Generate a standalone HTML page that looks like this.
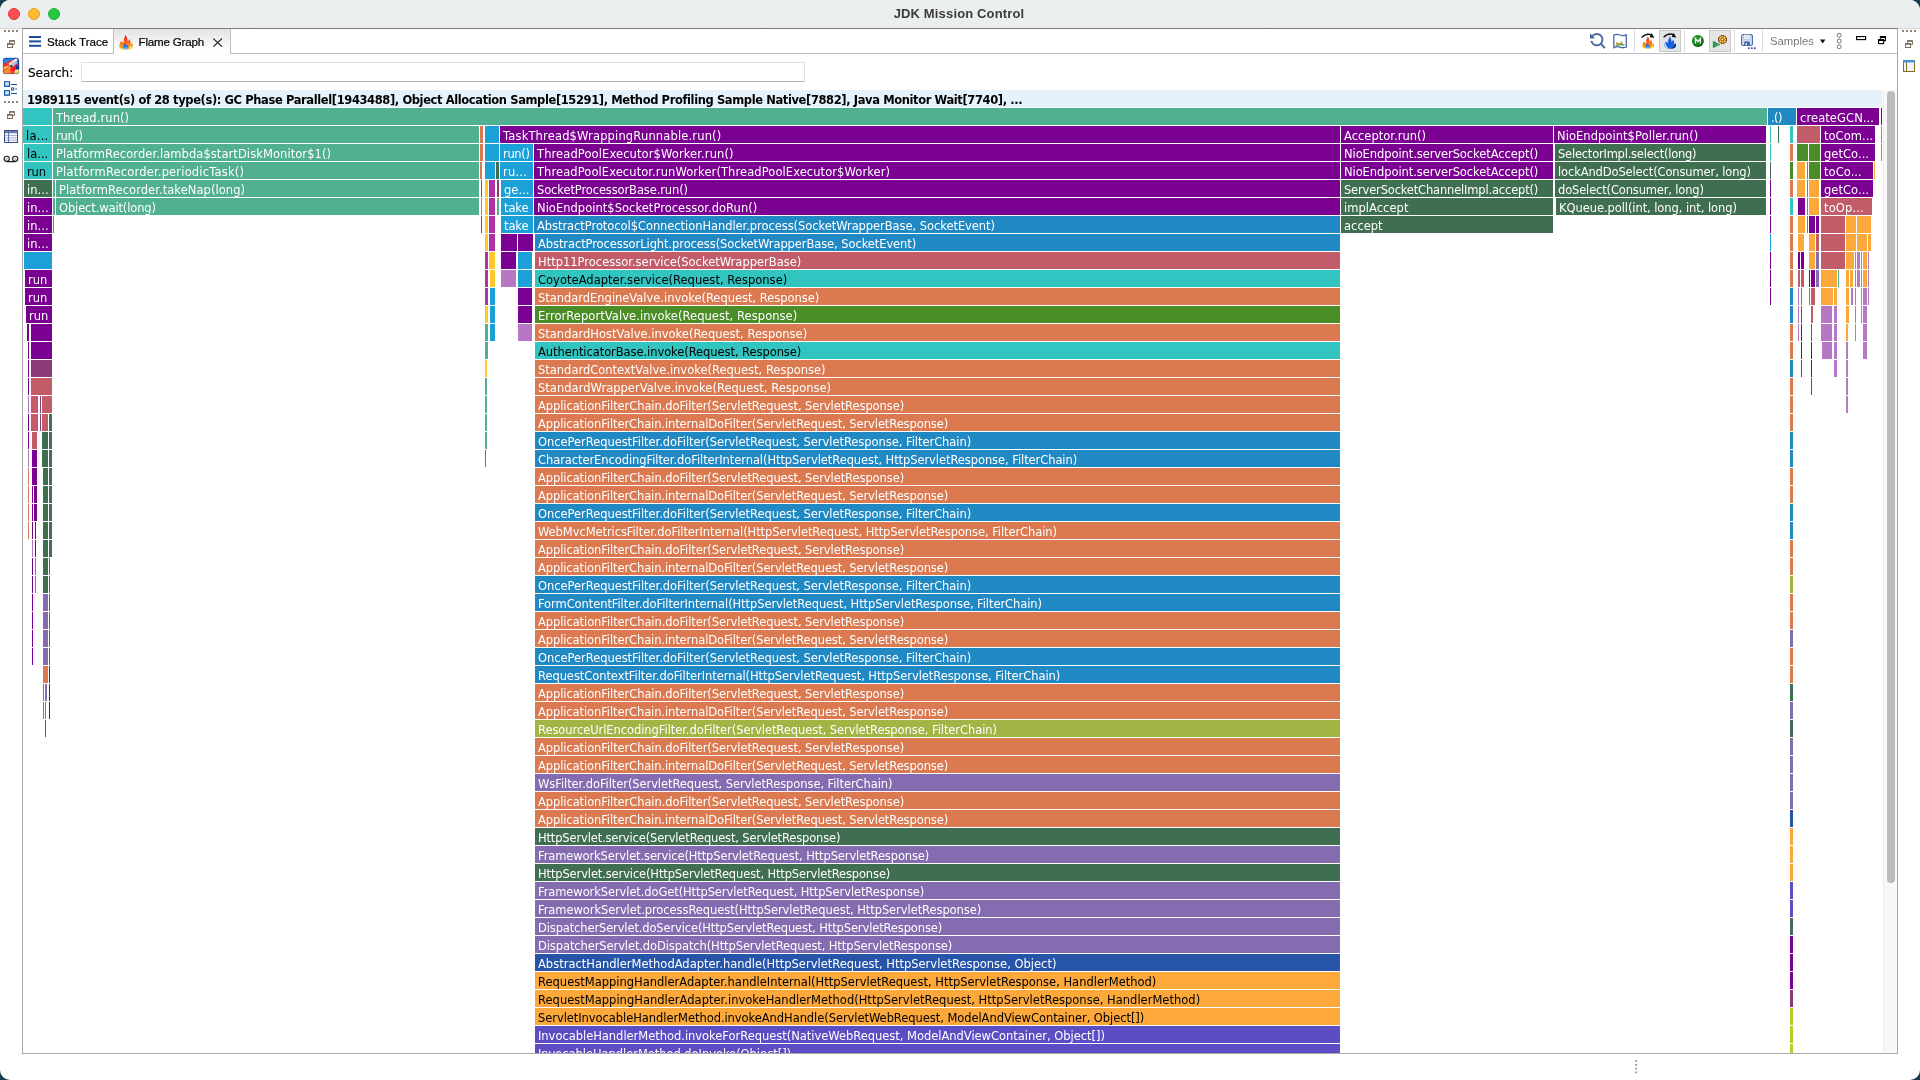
<!DOCTYPE html>
<html lang="en">
<head>
<meta charset="utf-8">
<title>JDK Mission Control</title>
<style>
*{box-sizing:border-box;margin:0;padding:0}
html,body{width:1920px;height:1080px;overflow:hidden;background:#153c4a}
body{position:relative;font-family:"DejaVu Sans","Liberation Sans",sans-serif;font-size:11.5px;color:#000}
#win{position:absolute;left:0;top:0;width:1920px;height:1080px;background:#fff;overflow:hidden;border-radius:10px;will-change:transform}
#titlebar{position:absolute;left:0;top:0;width:1920px;height:29px;background:linear-gradient(#f3f5f5,#ecefef 1.5px,#ebeeee 27px,#e9ecec 28px,#d6d8d8 28px)}
#title{position:absolute;left:0;top:0;width:1920px;height:28px;line-height:27px;text-align:center;font-family:"Liberation Sans",sans-serif;font-weight:bold;font-size:13px;color:#3c3c3c;letter-spacing:.15px;padding-right:2px}
.tl{position:absolute;top:8px;width:12px;height:12px;border-radius:50%}
#panel{position:absolute;left:22px;top:28px;width:1876px;height:1026px;border:1px solid #a9a9a9;border-top-color:#7e7e7e;background:#fff}
#tabline{position:absolute;left:23px;top:53px;width:1874px;height:1px;background:#bdbdbd}
.tab{position:absolute;top:29px;height:24px;font-family:"Liberation Sans",sans-serif;font-size:11.6px;color:#000;-webkit-text-stroke:.2px #000;line-height:25px;white-space:nowrap}
#tab1{left:23px;width:90px}
#tab2{left:113px;width:118px;height:25px;border-left:1px solid #bdbdbd;border-right:1px solid #bdbdbd;background:linear-gradient(#e3e3e3,#f4f4f4 55%,#fff 85%)}
.tab span{position:absolute;top:0}
#search{position:absolute;left:28px;top:63.6px;font-size:12px;line-height:18px;color:#000;-webkit-text-stroke:.15px #000}
#sinput{position:absolute;left:81px;top:62px;width:724px;height:20px;border:1px solid #e0e0e0;border-bottom-color:#b4b4b4;border-radius:1.5px;background:#fff}
#hdr{position:absolute;left:23px;top:90px;width:1859px;height:17px;overflow:hidden;background:#e5f2fb;font-family:"DejaVu Sans",sans-serif;font-weight:bold;font-size:11.5px;line-height:21px;padding-left:4px;white-space:nowrap;color:#000;letter-spacing:-.39px}
#track{position:absolute;left:1883px;top:90px;width:14px;height:963px;background:#f8f8f8;border-left:1px solid #ececec}
#thumb{position:absolute;left:1887px;top:91px;width:8px;height:792px;border-radius:4px;background:#bbb}
#flame{position:absolute;left:0;top:0;width:1897px;height:1053px;overflow:hidden}
.r{position:absolute;left:0;width:1897px;height:17px}
.s{position:absolute;top:0;height:17px;overflow:hidden;white-space:nowrap;color:#fff;line-height:20px;font-size:11.5px}
.s span{position:absolute;left:3px;top:0}
.k{color:#000}
.cG{background:#50B091}
.cC{background:#31C4C0}
.cP{background:#7B0092}
.cDG{background:#3F6E50}
.cB{background:#2089C4}
.cLB{background:#1CA0D8}
.cS{background:#C15C68}
.cO{background:#DB7A50}
.cOL{background:#4A8D26}
.cYG{background:#A2B444}
.cLV{background:#856BB0}
.cDB{background:#2554A8}
.cYO{background:#FDA83A}
.cIN{background:#5D4DC4}
.cOR{background:#B877C4}
.cY{background:#FFC72C}
.cM{background:#B030A8}
.cDM{background:#8B3A78}
.cLM{background:#B5CF2A}
.cCR{background:#C8325A}
.cOV{background:#8A9A3A}
.ic{position:absolute}
.sep{position:absolute;top:30px;width:1px;height:22px;background:#dcdcdc}
.pressed{position:absolute;top:30px;height:22px;background:#e5e5e5;border:1px solid #c8c8c8}
</style>
</head>
<body>
<div id="win">
<div id="titlebar"></div>
<div id="title">JDK Mission Control</div>
<div class="tl" style="left:8px;background:#fe5054;border:.5px solid #df3239"></div>
<div class="tl" style="left:28px;background:#febc2e;border:.5px solid #e0a028"></div>
<div class="tl" style="left:48px;background:#28c840;border:.5px solid #1fae32"></div>
<div id="panel"></div>
<div id="tabline"></div>
<div class="tab" id="tab1"><span style="left:24px">Stack Trace</span></div>
<div class="tab" id="tab2"><span style="left:24.5px;letter-spacing:-.2px">Flame Graph</span></div>
<div id="search">Search:</div>
<div id="sinput"></div>
<div id="hdr">1989115 event(s) of 28 type(s): GC Phase Parallel[1943488], Object Allocation Sample[15291], Method Profiling Sample Native[7882], Java Monitor Wait[7740], ...</div>
<div id="track"></div>
<div id="thumb"></div>
<div id="flame">
<div class="r" style="top:108px">
<div class="s cC" style="left:23px;width:29px"></div>
<div class="s cG" style="left:53px;width:1714px"><span style="letter-spacing:0.086px">Thread.run()</span></div>
<div class="s cB" style="left:1768px;width:28px"><span style="letter-spacing:-0.620px">.()</span></div>
<div class="s cP" style="left:1797px;width:82px"><span style="letter-spacing:0.089px">createGCN...</span></div>
<div class="s cP" style="left:1881px;width:1px"></div>
</div>
<div class="r" style="top:126px">
<div class="s cC k" style="left:23px;width:29px"><span style="letter-spacing:0.258px">la...</span></div>
<div class="s cG" style="left:53px;width:426px"><span style="letter-spacing:-0.320px">run()</span></div>
<div class="s cO" style="left:480px;width:3px"></div>
<div class="s cLB" style="left:485px;width:14px"></div>
<div class="s cP" style="left:500px;width:840px"><span style="letter-spacing:0.156px">TaskThread$WrappingRunnable.run()</span></div>
<div class="s cP" style="left:1341px;width:212px"><span style="letter-spacing:0.020px">Acceptor.run()</span></div>
<div class="s cP" style="left:1554px;width:212px"><span style="letter-spacing:0.054px">NioEndpoint$Poller.run()</span></div>
<div class="s cC" style="left:1770px;width:1px"></div>
<div class="s cDG" style="left:1778px;width:1px"></div>
<div class="s cC" style="left:1790px;width:3px"></div>
<div class="s cS" style="left:1797px;width:23px"></div>
<div class="s cP" style="left:1821px;width:54px"><span style="letter-spacing:0.031px">toCom...</span></div>
<div class="s cO" style="left:1881px;width:1px"></div>
</div>
<div class="r" style="top:144px">
<div class="s cC k" style="left:24px;width:28px"><span style="letter-spacing:0.008px">la...</span></div>
<div class="s cG" style="left:53px;width:426px"><span style="letter-spacing:0.073px">PlatformRecorder.lambda$startDiskMonitor$1()</span></div>
<div class="s cO" style="left:480px;width:3px"></div>
<div class="s cLB" style="left:485px;width:14px"></div>
<div class="s cLB" style="left:500px;width:33px"><span style="letter-spacing:-0.345px">run()</span></div>
<div class="s cP" style="left:534px;width:806px"><span style="letter-spacing:0.104px">ThreadPoolExecutor$Worker.run()</span></div>
<div class="s cP" style="left:1341px;width:212px"><span style="letter-spacing:-0.079px">NioEndpoint.serverSocketAccept()</span></div>
<div class="s cDG" style="left:1555px;width:211px"><span style="letter-spacing:-0.223px">SelectorImpl.select(long)</span></div>
<div class="s cC" style="left:1770px;width:1px"></div>
<div class="s cO" style="left:1790px;width:3px"></div>
<div class="s cOL" style="left:1797px;width:11px"></div>
<div class="s cOL" style="left:1809px;width:11px"></div>
<div class="s cP" style="left:1821px;width:54px"><span style="letter-spacing:0.040px">getCo...</span></div>
<div class="s cG" style="left:1881px;width:1px"></div>
</div>
<div class="r" style="top:162px">
<div class="s cC k" style="left:24px;width:28px"><span style="letter-spacing:-0.106px">run</span></div>
<div class="s cG" style="left:53px;width:426px"><span style="letter-spacing:0.177px">PlatformRecorder.periodicTask()</span></div>
<div class="s cO" style="left:480px;width:2px"></div>
<div class="s cLB" style="left:485px;width:9.5px"></div>
<div class="s cDG" style="left:496px;width:2.5px"></div>
<div class="s cLB" style="left:500px;width:33px"><span style="letter-spacing:0.191px">ru...</span></div>
<div class="s cP" style="left:534px;width:806px"><span style="letter-spacing:0.082px">ThreadPoolExecutor.runWorker(ThreadPoolExecutor$Worker)</span></div>
<div class="s cP" style="left:1341px;width:212px"><span style="letter-spacing:-0.079px">NioEndpoint.serverSocketAccept()</span></div>
<div class="s cDG" style="left:1555px;width:211px"><span style="letter-spacing:-0.126px">lockAndDoSelect(Consumer, long)</span></div>
<div class="s cDG" style="left:1770px;width:1px"></div>
<div class="s cOL" style="left:1790px;width:3px"></div>
<div class="s cYO" style="left:1797px;width:8px"></div>
<div class="s cS" style="left:1807px;width:1px"></div>
<div class="s cOL" style="left:1809px;width:11px"></div>
<div class="s cP" style="left:1821px;width:52px"><span style="letter-spacing:0.062px">toCo...</span></div>
<div class="s cYO" style="left:1874px;width:1px"></div>
</div>
<div class="r" style="top:180px">
<div class="s cDG" style="left:24px;width:28px"><span style="letter-spacing:0.037px">in...</span></div>
<div class="s cG" style="left:53px;width:1.5px"></div>
<div class="s cG" style="left:56px;width:423px"><span style="letter-spacing:0.060px">PlatformRecorder.takeNap(long)</span></div>
<div class="s cDG" style="left:481px;width:1px"></div>
<div class="s cY" style="left:485px;width:2.5px"></div>
<div class="s cM" style="left:489px;width:5.5px"></div>
<div class="s cDM" style="left:497px;width:1.5px"></div>
<div class="s cLB" style="left:501px;width:32px"><span style="letter-spacing:0.039px">ge...</span></div>
<div class="s cP" style="left:534px;width:806px"><span style="letter-spacing:-0.118px">SocketProcessorBase.run()</span></div>
<div class="s cDG" style="left:1341px;width:212px"><span style="letter-spacing:-0.175px">ServerSocketChannelImpl.accept()</span></div>
<div class="s cDG" style="left:1555px;width:211px"><span style="letter-spacing:-0.155px">doSelect(Consumer, long)</span></div>
<div class="s cP" style="left:1770px;width:1px"></div>
<div class="s cO" style="left:1790px;width:3px"></div>
<div class="s cYO" style="left:1797px;width:8px"></div>
<div class="s cS" style="left:1807px;width:1px"></div>
<div class="s cYO" style="left:1809px;width:10px"></div>
<div class="s cP" style="left:1821px;width:52px"><span style="letter-spacing:0.040px">getCo...</span></div>
</div>
<div class="r" style="top:198px">
<div class="s cP" style="left:24px;width:28px"><span style="letter-spacing:0.037px">in...</span></div>
<div class="s cG" style="left:53px;width:1.5px"></div>
<div class="s cG" style="left:56px;width:423px"><span style="letter-spacing:-0.129px">Object.wait(long)</span></div>
<div class="s cOV" style="left:481px;width:1px"></div>
<div class="s cY" style="left:485px;width:2.5px"></div>
<div class="s cM" style="left:489px;width:5.5px"></div>
<div class="s cG" style="left:497px;width:1.5px"></div>
<div class="s cLB" style="left:501px;width:32px"><span style="letter-spacing:-0.097px">take</span></div>
<div class="s cP" style="left:534px;width:806px"><span style="letter-spacing:0.031px">NioEndpoint$SocketProcessor.doRun()</span></div>
<div class="s cDG" style="left:1341px;width:212px"><span style="letter-spacing:0.034px">implAccept</span></div>
<div class="s cDG" style="left:1556px;width:210px"><span style="letter-spacing:-0.073px">KQueue.poll(int, long, int, long)</span></div>
<div class="s cP" style="left:1770px;width:1px"></div>
<div class="s cC" style="left:1790px;width:3px"></div>
<div class="s cP" style="left:1798px;width:7px"></div>
<div class="s cS" style="left:1807px;width:1px"></div>
<div class="s cYO" style="left:1809px;width:10px"></div>
<div class="s cS" style="left:1821px;width:51px"><span style="letter-spacing:0.121px">toOp...</span></div>
</div>
<div class="r" style="top:216px">
<div class="s cP" style="left:24px;width:28px"><span style="letter-spacing:0.037px">in...</span></div>
<div class="s cLB" style="left:53px;width:1px"></div>
<div class="s cDG" style="left:481px;width:1px"></div>
<div class="s cY" style="left:485px;width:2.5px"></div>
<div class="s cM" style="left:489px;width:5.5px"></div>
<div class="s cLB" style="left:501px;width:32px"><span style="letter-spacing:-0.097px">take</span></div>
<div class="s cB" style="left:534px;width:806px"><span style="letter-spacing:-0.059px">AbstractProtocol$ConnectionHandler.process(SocketWrapperBase, SocketEvent)</span></div>
<div class="s cDG" style="left:1341px;width:212px"><span style="letter-spacing:0.004px">accept</span></div>
<div class="s cP" style="left:1770px;width:1px"></div>
<div class="s cO" style="left:1790px;width:3px"></div>
<div class="s cYO" style="left:1798px;width:7px"></div>
<div class="s cS" style="left:1807px;width:1px"></div>
<div class="s cP" style="left:1809px;width:5.75px"></div>
<div class="s cP" style="left:1816px;width:3px"></div>
<div class="s cS" style="left:1821px;width:24px"></div>
<div class="s cYO" style="left:1846px;width:10px"></div>
<div class="s cYO" style="left:1857px;width:14px"></div>
</div>
<div class="r" style="top:234px">
<div class="s cP" style="left:24px;width:28px"><span style="letter-spacing:0.037px">in...</span></div>
<div class="s cY" style="left:485px;width:2.5px"></div>
<div class="s cM" style="left:489px;width:5.5px"></div>
<div class="s cP" style="left:501px;width:16px"></div>
<div class="s cP" style="left:518px;width:15px"></div>
<div class="s cB" style="left:535px;width:805px"><span style="letter-spacing:-0.086px">AbstractProcessorLight.process(SocketWrapperBase, SocketEvent)</span></div>
<div class="s cLB" style="left:1770px;width:1px"></div>
<div class="s cO" style="left:1790px;width:3px"></div>
<div class="s cYO" style="left:1798px;width:6px"></div>
<div class="s cYO" style="left:1809px;width:6px"></div>
<div class="s cS" style="left:1816px;width:3px"></div>
<div class="s cS" style="left:1821px;width:24px"></div>
<div class="s cYO" style="left:1846px;width:10px"></div>
<div class="s cYO" style="left:1857px;width:10px"></div>
<div class="s cYO" style="left:1868px;width:3px"></div>
</div>
<div class="r" style="top:252px">
<div class="s cLB" style="left:24px;width:28px"></div>
<div class="s cM" style="left:485px;width:2.5px"></div>
<div class="s cY" style="left:489px;width:5.5px"></div>
<div class="s cP" style="left:501px;width:15px"></div>
<div class="s cLB" style="left:518px;width:14px"></div>
<div class="s cS" style="left:535px;width:805px"><span>Http11Processor.service(SocketWrapperBase)</span></div>
<div class="s cP" style="left:1770px;width:1px"></div>
<div class="s cO" style="left:1790px;width:3px"></div>
<div class="s cP" style="left:1798px;width:2px"></div>
<div class="s cP" style="left:1801px;width:3px"></div>
<div class="s cYO" style="left:1809px;width:6px"></div>
<div class="s cLV" style="left:1816px;width:3px"></div>
<div class="s cS" style="left:1821px;width:24px"></div>
<div class="s cYO" style="left:1846px;width:8px"></div>
<div class="s cOR" style="left:1855px;width:1px"></div>
<div class="s cOR" style="left:1857px;width:3px"></div>
<div class="s cOR" style="left:1861px;width:1px"></div>
<div class="s cYO" style="left:1863px;width:4px"></div>
<div class="s cOR" style="left:1868px;width:1px"></div>
</div>
<div class="r" style="top:270px">
<div class="s cP" style="left:25px;width:27px"><span style="letter-spacing:0.044px">run</span></div>
<div class="s cM" style="left:485px;width:2.5px"></div>
<div class="s cY" style="left:490px;width:4.5px"></div>
<div class="s cOR" style="left:501px;width:15px"></div>
<div class="s cLB" style="left:518px;width:14px"></div>
<div class="s cC k" style="left:535px;width:805px"><span style="letter-spacing:0.028px">CoyoteAdapter.service(Request, Response)</span></div>
<div class="s cP" style="left:1770px;width:1px"></div>
<div class="s cO" style="left:1790px;width:3px"></div>
<div class="s cS" style="left:1798px;width:2px"></div>
<div class="s cS" style="left:1801px;width:3px"></div>
<div class="s cP" style="left:1809px;width:1px"></div>
<div class="s cP" style="left:1811px;width:4px"></div>
<div class="s cLV" style="left:1816px;width:3px"></div>
<div class="s cYO" style="left:1821px;width:16px"></div>
<div class="s cG" style="left:1838px;width:1px"></div>
<div class="s cYO" style="left:1846px;width:3px"></div>
<div class="s cYO" style="left:1850px;width:3px"></div>
<div class="s cOR" style="left:1855px;width:1px"></div>
<div class="s cOR" style="left:1857px;width:3px"></div>
<div class="s cOR" style="left:1861px;width:1px"></div>
<div class="s cYO" style="left:1863px;width:4px"></div>
<div class="s cOR" style="left:1868px;width:1px"></div>
</div>
<div class="r" style="top:288px">
<div class="s cP" style="left:25px;width:27px"><span style="letter-spacing:0.044px">run</span></div>
<div class="s cM" style="left:485px;width:2.5px"></div>
<div class="s cLB" style="left:490px;width:4.5px"></div>
<div class="s cP" style="left:518px;width:14px"></div>
<div class="s cO" style="left:535px;width:805px"><span style="letter-spacing:-0.026px">StandardEngineValve.invoke(Request, Response)</span></div>
<div class="s cP" style="left:1770px;width:1px"></div>
<div class="s cB" style="left:1790px;width:3px"></div>
<div class="s cOR" style="left:1798px;width:1px"></div>
<div class="s cS" style="left:1801px;width:1px"></div>
<div class="s cS" style="left:1809px;width:1px"></div>
<div class="s cS" style="left:1811px;width:4px"></div>
<div class="s cYO" style="left:1821px;width:12px"></div>
<div class="s cYO" style="left:1834px;width:3px"></div>
<div class="s cYO" style="left:1846px;width:3px"></div>
<div class="s cOR" style="left:1851px;width:2px"></div>
<div class="s cOR" style="left:1855px;width:1px"></div>
<div class="s cOR" style="left:1861px;width:1px"></div>
<div class="s cOR" style="left:1863px;width:4px"></div>
<div class="s cOR" style="left:1868px;width:1px"></div>
</div>
<div class="r" style="top:306px">
<div class="s cP" style="left:26px;width:26px"><span style="letter-spacing:-0.031px">run</span></div>
<div class="s cY" style="left:485px;width:2.5px"></div>
<div class="s cLB" style="left:490px;width:4.5px"></div>
<div class="s cP" style="left:518px;width:14px"></div>
<div class="s cOL" style="left:535px;width:805px"><span style="letter-spacing:0.060px">ErrorReportValve.invoke(Request, Response)</span></div>
<div class="s cB" style="left:1790px;width:3px"></div>
<div class="s cOR" style="left:1798px;width:1px"></div>
<div class="s cDG" style="left:1801px;width:1px"></div>
<div class="s cS" style="left:1811px;width:2px"></div>
<div class="s cOR" style="left:1821px;width:11px"></div>
<div class="s cOR" style="left:1834px;width:3px"></div>
<div class="s cYO" style="left:1846px;width:3px"></div>
<div class="s cOR" style="left:1855px;width:1px"></div>
<div class="s cOR" style="left:1861px;width:1px"></div>
<div class="s cOR" style="left:1863px;width:4px"></div>
</div>
<div class="r" style="top:324px">
<div class="s cP" style="left:27px;width:1.5px"></div>
<div class="s cP" style="left:31px;width:21px"></div>
<div class="s cG" style="left:485px;width:2.5px"></div>
<div class="s cLB" style="left:490px;width:4.5px"></div>
<div class="s cOR" style="left:518px;width:14px"></div>
<div class="s cO" style="left:535px;width:805px"><span>StandardHostValve.invoke(Request, Response)</span></div>
<div class="s cO" style="left:1790px;width:3px"></div>
<div class="s cOR" style="left:1798px;width:1px"></div>
<div class="s cP" style="left:1801px;width:1px"></div>
<div class="s cDG" style="left:1811px;width:1px"></div>
<div class="s cOR" style="left:1821px;width:11px"></div>
<div class="s cOR" style="left:1834px;width:3px"></div>
<div class="s cYO" style="left:1846px;width:2px"></div>
<div class="s cOR" style="left:1855px;width:1px"></div>
<div class="s cOR" style="left:1863px;width:4px"></div>
</div>
<div class="r" style="top:342px">
<div class="s cP" style="left:28px;width:1px"></div>
<div class="s cP" style="left:31px;width:21px"></div>
<div class="s cG" style="left:485px;width:2.5px"></div>
<div class="s cC k" style="left:535px;width:805px"><span style="letter-spacing:-0.070px">AuthenticatorBase.invoke(Request, Response)</span></div>
<div class="s cO" style="left:1790px;width:3px"></div>
<div class="s cP" style="left:1801px;width:1px"></div>
<div class="s cP" style="left:1811px;width:1px"></div>
<div class="s cOR" style="left:1822px;width:10px"></div>
<div class="s cOR" style="left:1834px;width:3px"></div>
<div class="s cOR" style="left:1846px;width:2px"></div>
<div class="s cOR" style="left:1863px;width:4px"></div>
</div>
<div class="r" style="top:360px">
<div class="s cP" style="left:28px;width:1px"></div>
<div class="s cDM" style="left:31px;width:21px"></div>
<div class="s cY" style="left:485px;width:2px"></div>
<div class="s cO" style="left:535px;width:805px"><span style="letter-spacing:-0.011px">StandardContextValve.invoke(Request, Response)</span></div>
<div class="s cB" style="left:1790px;width:3px"></div>
<div class="s cDM" style="left:1801px;width:1px"></div>
<div class="s cP" style="left:1811px;width:1px"></div>
<div class="s cOR" style="left:1834px;width:3px"></div>
<div class="s cOR" style="left:1846px;width:2px"></div>
</div>
<div class="r" style="top:378px">
<div class="s cP" style="left:28px;width:1px"></div>
<div class="s cS" style="left:31px;width:21px"></div>
<div class="s cG" style="left:485px;width:2px"></div>
<div class="s cO" style="left:535px;width:805px"><span style="letter-spacing:0.025px">StandardWrapperValve.invoke(Request, Response)</span></div>
<div class="s cO" style="left:1790px;width:3px"></div>
<div class="s cDM" style="left:1811px;width:1px"></div>
<div class="s cOR" style="left:1846px;width:2px"></div>
</div>
<div class="r" style="top:396px">
<div class="s cOR" style="left:28px;width:1px"></div>
<div class="s cS" style="left:31px;width:7px"></div>
<div class="s cDM" style="left:40px;width:1px"></div>
<div class="s cS" style="left:42px;width:10px"></div>
<div class="s cG" style="left:485px;width:2px"></div>
<div class="s cO" style="left:535px;width:805px"><span style="letter-spacing:-0.088px">ApplicationFilterChain.doFilter(ServletRequest, ServletResponse)</span></div>
<div class="s cO" style="left:1790px;width:3px"></div>
<div class="s cOR" style="left:1846px;width:2px"></div>
</div>
<div class="r" style="top:414px">
<div class="s cP" style="left:28px;width:1px"></div>
<div class="s cS" style="left:31px;width:7px"></div>
<div class="s cDM" style="left:40px;width:1px"></div>
<div class="s cS" style="left:42px;width:6px"></div>
<div class="s cDG" style="left:49px;width:3px"></div>
<div class="s cG" style="left:485px;width:2px"></div>
<div class="s cO" style="left:535px;width:805px"><span style="letter-spacing:-0.101px">ApplicationFilterChain.internalDoFilter(ServletRequest, ServletResponse)</span></div>
<div class="s cO" style="left:1790px;width:3px"></div>
</div>
<div class="r" style="top:432px">
<div class="s cP" style="left:28px;width:1px"></div>
<div class="s cS" style="left:32px;width:5px"></div>
<div class="s cDG" style="left:42px;width:6px"></div>
<div class="s cDG" style="left:49px;width:3px"></div>
<div class="s cG" style="left:485px;width:2px"></div>
<div class="s cB" style="left:535px;width:805px"><span style="letter-spacing:-0.050px">OncePerRequestFilter.doFilter(ServletRequest, ServletResponse, FilterChain)</span></div>
<div class="s cB" style="left:1790px;width:3px"></div>
</div>
<div class="r" style="top:450px">
<div class="s cOR" style="left:28px;width:1px"></div>
<div class="s cP" style="left:32px;width:5px"></div>
<div class="s cDG" style="left:42px;width:6px"></div>
<div class="s cDG" style="left:49px;width:3px"></div>
<div class="s cB" style="left:485px;width:1px"></div>
<div class="s cB" style="left:535px;width:805px"><span style="letter-spacing:-0.075px">CharacterEncodingFilter.doFilterInternal(HttpServletRequest, HttpServletResponse, FilterChain)</span></div>
<div class="s cB" style="left:1790px;width:3px"></div>
</div>
<div class="r" style="top:468px">
<div class="s cO" style="left:28px;width:1px"></div>
<div class="s cP" style="left:32px;width:5px"></div>
<div class="s cDG" style="left:43px;width:5px"></div>
<div class="s cDG" style="left:49px;width:3px"></div>
<div class="s cO" style="left:535px;width:805px"><span style="letter-spacing:-0.088px">ApplicationFilterChain.doFilter(ServletRequest, ServletResponse)</span></div>
<div class="s cO" style="left:1790px;width:3px"></div>
</div>
<div class="r" style="top:486px">
<div class="s cO" style="left:28px;width:1px"></div>
<div class="s cP" style="left:32px;width:1px"></div>
<div class="s cP" style="left:34px;width:3px"></div>
<div class="s cDG" style="left:43px;width:5px"></div>
<div class="s cDG" style="left:49px;width:3px"></div>
<div class="s cO" style="left:535px;width:805px"><span style="letter-spacing:-0.101px">ApplicationFilterChain.internalDoFilter(ServletRequest, ServletResponse)</span></div>
<div class="s cO" style="left:1790px;width:3px"></div>
</div>
<div class="r" style="top:504px">
<div class="s cO" style="left:28px;width:1px"></div>
<div class="s cP" style="left:32px;width:1px"></div>
<div class="s cP" style="left:34px;width:3px"></div>
<div class="s cDG" style="left:43px;width:5px"></div>
<div class="s cDG" style="left:49px;width:3px"></div>
<div class="s cB" style="left:535px;width:805px"><span style="letter-spacing:-0.050px">OncePerRequestFilter.doFilter(ServletRequest, ServletResponse, FilterChain)</span></div>
<div class="s cB" style="left:1790px;width:3px"></div>
</div>
<div class="r" style="top:522px">
<div class="s cO" style="left:28px;width:1px"></div>
<div class="s cP" style="left:32px;width:1px"></div>
<div class="s cP" style="left:35px;width:1px"></div>
<div class="s cDG" style="left:43px;width:5px"></div>
<div class="s cDG" style="left:49px;width:3px"></div>
<div class="s cO" style="left:535px;width:805px"><span style="letter-spacing:-0.081px">WebMvcMetricsFilter.doFilterInternal(HttpServletRequest, HttpServletResponse, FilterChain)</span></div>
<div class="s cB" style="left:1790px;width:3px"></div>
</div>
<div class="r" style="top:540px">
<div class="s cOR" style="left:32px;width:1px"></div>
<div class="s cP" style="left:35px;width:1px"></div>
<div class="s cDG" style="left:43px;width:5px"></div>
<div class="s cDG" style="left:49px;width:3px"></div>
<div class="s cO" style="left:535px;width:805px"><span style="letter-spacing:-0.088px">ApplicationFilterChain.doFilter(ServletRequest, ServletResponse)</span></div>
<div class="s cO" style="left:1790px;width:3px"></div>
</div>
<div class="r" style="top:558px">
<div class="s cP" style="left:32px;width:1px"></div>
<div class="s cLB" style="left:35px;width:1px"></div>
<div class="s cDG" style="left:43px;width:5px"></div>
<div class="s cDG" style="left:49px;width:1px"></div>
<div class="s cO" style="left:535px;width:805px"><span style="letter-spacing:-0.101px">ApplicationFilterChain.internalDoFilter(ServletRequest, ServletResponse)</span></div>
<div class="s cO" style="left:1790px;width:3px"></div>
</div>
<div class="r" style="top:576px">
<div class="s cP" style="left:32px;width:1px"></div>
<div class="s cLB" style="left:35px;width:1px"></div>
<div class="s cDG" style="left:43px;width:5px"></div>
<div class="s cDG" style="left:49px;width:1px"></div>
<div class="s cB" style="left:535px;width:805px"><span style="letter-spacing:-0.050px">OncePerRequestFilter.doFilter(ServletRequest, ServletResponse, FilterChain)</span></div>
<div class="s cYG" style="left:1790px;width:3px"></div>
</div>
<div class="r" style="top:594px">
<div class="s cP" style="left:32px;width:1px"></div>
<div class="s cLV" style="left:43px;width:5px"></div>
<div class="s cDG" style="left:49px;width:1px"></div>
<div class="s cB" style="left:535px;width:805px"><span style="letter-spacing:-0.082px">FormContentFilter.doFilterInternal(HttpServletRequest, HttpServletResponse, FilterChain)</span></div>
<div class="s cO" style="left:1790px;width:3px"></div>
</div>
<div class="r" style="top:612px">
<div class="s cP" style="left:32px;width:1px"></div>
<div class="s cLV" style="left:43px;width:5px"></div>
<div class="s cDG" style="left:49px;width:1px"></div>
<div class="s cO" style="left:535px;width:805px"><span style="letter-spacing:-0.088px">ApplicationFilterChain.doFilter(ServletRequest, ServletResponse)</span></div>
<div class="s cO" style="left:1790px;width:3px"></div>
</div>
<div class="r" style="top:630px">
<div class="s cP" style="left:32px;width:1px"></div>
<div class="s cLV" style="left:43px;width:5px"></div>
<div class="s cDG" style="left:49px;width:1px"></div>
<div class="s cO" style="left:535px;width:805px"><span style="letter-spacing:-0.101px">ApplicationFilterChain.internalDoFilter(ServletRequest, ServletResponse)</span></div>
<div class="s cLV" style="left:1790px;width:3px"></div>
</div>
<div class="r" style="top:648px">
<div class="s cP" style="left:32px;width:1px"></div>
<div class="s cLV" style="left:43px;width:5px"></div>
<div class="s cDG" style="left:49px;width:1px"></div>
<div class="s cB" style="left:535px;width:805px"><span style="letter-spacing:-0.050px">OncePerRequestFilter.doFilter(ServletRequest, ServletResponse, FilterChain)</span></div>
<div class="s cO" style="left:1790px;width:3px"></div>
</div>
<div class="r" style="top:666px">
<div class="s cO" style="left:43px;width:5px"></div>
<div class="s cP" style="left:49px;width:1px"></div>
<div class="s cB" style="left:535px;width:805px"><span style="letter-spacing:-0.066px">RequestContextFilter.doFilterInternal(HttpServletRequest, HttpServletResponse, FilterChain)</span></div>
<div class="s cO" style="left:1790px;width:3px"></div>
</div>
<div class="r" style="top:684px">
<div class="s cLV" style="left:43px;width:1px"></div>
<div class="s cLV" style="left:45px;width:2px"></div>
<div class="s cP" style="left:49px;width:1px"></div>
<div class="s cO" style="left:535px;width:805px"><span style="letter-spacing:-0.088px">ApplicationFilterChain.doFilter(ServletRequest, ServletResponse)</span></div>
<div class="s cDG" style="left:1790px;width:3px"></div>
</div>
<div class="r" style="top:702px">
<div class="s cLV" style="left:43px;width:1px"></div>
<div class="s cLV" style="left:45px;width:1px"></div>
<div class="s cP" style="left:49px;width:1px"></div>
<div class="s cO" style="left:535px;width:805px"><span style="letter-spacing:-0.101px">ApplicationFilterChain.internalDoFilter(ServletRequest, ServletResponse)</span></div>
<div class="s cLV" style="left:1790px;width:3px"></div>
</div>
<div class="r" style="top:720px">
<div class="s cCR" style="left:45px;width:1px"></div>
<div class="s cYG" style="left:535px;width:805px"><span style="letter-spacing:-0.066px">ResourceUrlEncodingFilter.doFilter(ServletRequest, ServletResponse, FilterChain)</span></div>
<div class="s cDG" style="left:1790px;width:3px"></div>
</div>
<div class="r" style="top:738px">
<div class="s cO" style="left:535px;width:805px"><span style="letter-spacing:-0.088px">ApplicationFilterChain.doFilter(ServletRequest, ServletResponse)</span></div>
<div class="s cLV" style="left:1790px;width:3px"></div>
</div>
<div class="r" style="top:756px">
<div class="s cO" style="left:535px;width:805px"><span style="letter-spacing:-0.101px">ApplicationFilterChain.internalDoFilter(ServletRequest, ServletResponse)</span></div>
<div class="s cLV" style="left:1790px;width:3px"></div>
</div>
<div class="r" style="top:774px">
<div class="s cLV" style="left:535px;width:805px"><span style="letter-spacing:-0.081px">WsFilter.doFilter(ServletRequest, ServletResponse, FilterChain)</span></div>
<div class="s cLV" style="left:1790px;width:3px"></div>
</div>
<div class="r" style="top:792px">
<div class="s cO" style="left:535px;width:805px"><span style="letter-spacing:-0.088px">ApplicationFilterChain.doFilter(ServletRequest, ServletResponse)</span></div>
<div class="s cLV" style="left:1790px;width:3px"></div>
</div>
<div class="r" style="top:810px">
<div class="s cO" style="left:535px;width:805px"><span style="letter-spacing:-0.101px">ApplicationFilterChain.internalDoFilter(ServletRequest, ServletResponse)</span></div>
<div class="s cDB" style="left:1790px;width:3px"></div>
</div>
<div class="r" style="top:828px">
<div class="s cDG" style="left:535px;width:805px"><span style="letter-spacing:-0.149px">HttpServlet.service(ServletRequest, ServletResponse)</span></div>
<div class="s cYO" style="left:1790px;width:3px"></div>
</div>
<div class="r" style="top:846px">
<div class="s cLV" style="left:535px;width:805px"><span style="letter-spacing:-0.116px">FrameworkServlet.service(HttpServletRequest, HttpServletResponse)</span></div>
<div class="s cYO" style="left:1790px;width:3px"></div>
</div>
<div class="r" style="top:864px">
<div class="s cDG" style="left:535px;width:805px"><span style="letter-spacing:-0.131px">HttpServlet.service(HttpServletRequest, HttpServletResponse)</span></div>
<div class="s cYO" style="left:1790px;width:3px"></div>
</div>
<div class="r" style="top:882px">
<div class="s cLV" style="left:535px;width:805px"><span style="letter-spacing:-0.098px">FrameworkServlet.doGet(HttpServletRequest, HttpServletResponse)</span></div>
<div class="s cIN" style="left:1790px;width:3px"></div>
</div>
<div class="r" style="top:900px">
<div class="s cLV" style="left:535px;width:805px"><span style="letter-spacing:-0.074px">FrameworkServlet.processRequest(HttpServletRequest, HttpServletResponse)</span></div>
<div class="s cIN" style="left:1790px;width:3px"></div>
</div>
<div class="r" style="top:918px">
<div class="s cLV" style="left:535px;width:805px"><span style="letter-spacing:-0.132px">DispatcherServlet.doService(HttpServletRequest, HttpServletResponse)</span></div>
<div class="s cDG" style="left:1790px;width:3px"></div>
</div>
<div class="r" style="top:936px">
<div class="s cLV" style="left:535px;width:805px"><span style="letter-spacing:-0.099px">DispatcherServlet.doDispatch(HttpServletRequest, HttpServletResponse)</span></div>
<div class="s cP" style="left:1790px;width:3px"></div>
</div>
<div class="r" style="top:954px">
<div class="s cDB" style="left:535px;width:805px"><span>AbstractHandlerMethodAdapter.handle(HttpServletRequest, HttpServletResponse, Object)</span></div>
<div class="s cP" style="left:1790px;width:3px"></div>
</div>
<div class="r" style="top:972px">
<div class="s cYO k" style="left:535px;width:805px"><span>RequestMappingHandlerAdapter.handleInternal(HttpServletRequest, HttpServletResponse, HandlerMethod)</span></div>
<div class="s cP" style="left:1790px;width:3px"></div>
</div>
<div class="r" style="top:990px">
<div class="s cYO k" style="left:535px;width:805px"><span style="letter-spacing:0.012px">RequestMappingHandlerAdapter.invokeHandlerMethod(HttpServletRequest, HttpServletResponse, HandlerMethod)</span></div>
<div class="s cDM" style="left:1790px;width:3px"></div>
</div>
<div class="r" style="top:1008px">
<div class="s cYO k" style="left:535px;width:805px"><span style="letter-spacing:-0.058px">ServletInvocableHandlerMethod.invokeAndHandle(ServletWebRequest, ModelAndViewContainer, Object[])</span></div>
<div class="s cLM" style="left:1790px;width:3px"></div>
</div>
<div class="r" style="top:1026px">
<div class="s cIN" style="left:535px;width:805px"><span style="letter-spacing:-0.028px">InvocableHandlerMethod.invokeForRequest(NativeWebRequest, ModelAndViewContainer, Object[])</span></div>
<div class="s cLM" style="left:1790px;width:3px"></div>
</div>
<div class="r" style="top:1044px">
<div class="s cIN" style="left:535px;width:805px"><span style="letter-spacing:-0.051px">InvocableHandlerMethod.doInvoke(Object[])</span></div>
<div class="s cLM" style="left:1790px;width:3px"></div>
</div>
</div>
<!-- left strip -->
<svg class="ic" style="left:0;top:28px" width="22" height="140" viewBox="0 28 22 140">
 <g fill="#8b8378"><rect x="4" y="30" width="2" height="2"/><rect x="8" y="30" width="2" height="2"/><rect x="12" y="30" width="2" height="2"/><rect x="16" y="30" width="2" height="2"/>
 <rect x="4" y="101" width="2" height="2"/><rect x="8" y="101" width="2" height="2"/><rect x="12" y="101" width="2" height="2"/><rect x="16" y="101" width="2" height="2"/></g>
 <g fill="none" stroke="#7a7065" stroke-width="1">
  <path d="M9.5 43V40.5H14.5V44.5H13"/><path d="M9.5 41.3H14.5"/>
  <rect x="7.5" y="43.5" width="5" height="4" fill="#fff"/><path d="M7.5 44.3H12.5"/>
  <path d="M9.5 114V111.5H14.5V115.5H13"/><path d="M9.5 112.3H14.5"/>
  <rect x="7.5" y="114.5" width="5" height="4" fill="#fff"/><path d="M7.5 115.3H12.5"/>
 </g>
 <!-- JMC icon -->
 <defs>
  <linearGradient id="jg" x1="0" y1="0" x2="1" y2="1"><stop offset="0" stop-color="#1a6fd8"/><stop offset=".3" stop-color="#e8302a"/><stop offset=".65" stop-color="#f0501e"/><stop offset="1" stop-color="#f8b020"/></linearGradient>
  <linearGradient id="lb" x1="0" y1="0" x2="0" y2="1"><stop offset="0" stop-color="#f4f9ff"/><stop offset="1" stop-color="#9cc2f2"/></linearGradient>
 </defs>
 <clipPath id="jc"><rect x="3.1" y="58" width="15.8" height="15.8" rx="2"/></clipPath>
 <g clip-path="url(#jc)">
  <rect x="3" y="58" width="16" height="16" fill="#0a5ad4"/>
  <rect x="3" y="59" width="10" height="4" fill="#1e86ec"/>
  <rect x="16.2" y="60" width="3" height="10.5" fill="#0434b4"/><rect x="17" y="62.5" width="1.4" height="3.5" fill="#1a7ae0"/>
  <path d="M3 64.2L11.8 59.4L13 60L8.9 66L3 68.6Z" fill="#f2352a"/>
  <path d="M3 67.4L9.4 65L11 67.4V74H3Z" fill="#ff8a22"/>
  <path d="M3.6 67.2L8.6 65.6L8.2 67.2L4 69Z" fill="#ffd088"/>
  <path d="M11 67.4L16.9 63.8L16.5 66.6L13.9 74H10Z" fill="#ff1028"/>
  <path d="M10.4 71L13.6 70.2L13.4 74H10Z" fill="#ff4a30"/>
  <path d="M13.9 74L15.2 69.8L19 69.2V74Z" fill="#ffcf24"/>
  <path d="M15 70.6L18.6 69.8V71.4L14.7 71.8Z" fill="#fff2b0"/>
  <path d="M8.5 63.8L15 58.9L18.4 58.6L18.2 62L12 67.5Z" fill="#fafafc"/>
  <path d="M12.6 64.2L17.6 59.6L18.3 59.2L18.2 62L12 67.5L11 66Z" fill="#b4b7c0"/>
  <path d="M17.2 59.4L18.4 58.9L18.2 61.6L16.9 62.4Z" fill="#3a3f4a"/>
  <path d="M10.4 65L14.4 61.6" stroke="#e02424" stroke-width=".9" stroke-dasharray="1 .5"/>
  <path d="M10.3 65.8L12 65L12.5 66.4L11.2 67.4Z" fill="#101010"/>
  <path d="M3.2 71L9.4 65.8" stroke="#a81c14" stroke-width=".7" stroke-dasharray="1 .45"/>
 </g>
 <rect x="3.1" y="58" width="15.8" height="15.8" rx="2" fill="none" stroke="#0a3c9c" stroke-opacity=".55" stroke-width=".6"/>
 <!-- tree icon -->
 <g stroke="#0b52a4" stroke-width="1.1" fill="url(#lb)"><rect x="4.55" y="81.75" width="5" height="4.6"/><rect x="4.55" y="90.65" width="5" height="4.6"/></g>
 <g stroke="#0b52a4" fill="none"><path d="M11 84.5H17M11 93.5H17" stroke-width="1.1"/><rect x="11.5" y="87.9" width="2.2" height="2.2" stroke-width=".9" fill="#fff"/><path d="M15.2 89H17" stroke-width="1.1"/></g>
 <!-- table icon -->
 <rect x="4.5" y="130.5" width="13" height="12" fill="#f4f6fb" stroke="#3f5286" stroke-width="1"/>
 <rect x="5" y="131" width="12" height="2.2" fill="#6a7cab"/>
 <path d="M8.5 131V142M5 135.5H17M5 137.8H17M5 140.1H17" stroke="#8a96bb" stroke-width=".7" fill="none"/>
 <path d="M8.5 131V142" stroke="#4f6396" stroke-width=".8"/>
 <!-- tape icon -->
 <g fill="none" stroke="#1c1c1c" stroke-width="1.1"><circle cx="6.7" cy="158.8" r="2.6"/><circle cx="15.2" cy="158.8" r="2.6"/><path d="M6.7 161.6H15.2"/></g>
 <g stroke="#555" stroke-width=".7"><path d="M5.6 160L7.8 157.6M14.1 157.6L16.3 160"/></g>
</svg>
<!-- right strip -->
<svg class="ic" style="left:1898px;top:28px" width="22" height="50" viewBox="1898 28 22 50">
 <g fill="#8b8378"><rect x="1902" y="30" width="2" height="2"/><rect x="1906" y="30" width="2" height="2"/><rect x="1910" y="30" width="2" height="2"/><rect x="1914" y="30" width="2" height="2"/></g>
 <g fill="none" stroke="#7a7065" stroke-width="1">
  <path d="M1907.5 43V40.5H1912.5V44.5H1911"/><path d="M1907.5 41.3H1912.5"/>
  <rect x="1905.5" y="43.5" width="5" height="4" fill="#fff"/><path d="M1905.5 44.3H1910.5"/>
 </g>
 <rect x="1903.5" y="60.5" width="11" height="11" fill="#eaf5fd" stroke="#8a6a1e" stroke-width="1"/>
 <rect x="1903" y="60" width="12" height="2.4" fill="#4a8fd0"/>
 <path d="M1906.5 62.4V71" stroke="#8a6a1e" stroke-width="1"/>
</svg>
<!-- tab icons -->
<svg class="ic" style="left:28px;top:34px" width="14" height="14" viewBox="28 34 14 14">
 <g fill="#1b4f9c"><rect x="29" y="36" width="12" height="2"/><rect x="29" y="40.4" width="12" height="2"/><rect x="29" y="44.8" width="12" height="2"/></g>
</svg>
<svg class="ic" style="left:118px;top:33px" width="16" height="18" viewBox="118 33 16 18">
 <defs><linearGradient id="fg" x1="0" y1="0" x2="0" y2="1"><stop offset="0" stop-color="#e0141c"/><stop offset=".3" stop-color="#f43a18"/><stop offset=".6" stop-color="#ff7a1c"/><stop offset=".85" stop-color="#ffa41e"/><stop offset="1" stop-color="#ffc428"/></linearGradient>
 <linearGradient id="fb" x1="0" y1="0" x2="0" y2="1"><stop offset="0" stop-color="#1450d8"/><stop offset=".6" stop-color="#2a86f0"/><stop offset="1" stop-color="#8fd4ff"/></linearGradient></defs>
 <path d="M125.3 34.2C126 36.2 123.6 38 123.6 40.4C123.6 41.4 124 42 124.2 42.6C123 42.4 121.6 41.8 120.6 41.2C120.8 42.6 119.2 44 119.2 46C119.2 48.4 121.6 49.8 125.8 49.8C130.2 49.8 132.8 48.2 132.8 45.8C132.8 44.6 132.4 43.8 132 43C131.6 43.8 131.2 44.2 130.6 44.4C131 42.4 130.4 40.2 129.2 38.8C129 40.2 128.4 41 127.6 41.6C127.8 39 126.6 36.4 125.3 34.2Z" fill="url(#fg)"/>
 <path d="M125.4 43C124.6 44.4 122.6 45.2 122.6 47C122.6 48.6 124 49.5 125.6 49.5C127.2 49.5 128.4 48.6 128.4 47.2C128.4 46 127.8 45.4 127.4 44.6C127.2 45.2 126.8 45.6 126.4 45.6C126.4 44.6 126 43.8 125.4 43Z" fill="url(#fb)"/>
 <path d="M130.4 45C130.8 46 131.8 46.4 131.4 47.6C131 48.4 130 48.9 129.2 49C130 47.8 129.9 46.4 130.4 45Z" fill="#fff23a"/>
</svg>
<svg class="ic" style="left:212px;top:37px" width="12" height="12" viewBox="212 37 12 12">
 <path d="M213.3 38.6L222 46.6M222 38.6L213.3 46.6" stroke="#1a1a1a" stroke-width="1.2" fill="none"/>
</svg>
<!-- toolbar -->
<div class="sep" style="left:1634px"></div><div class="sep" style="left:1684px"></div><div class="sep" style="left:1734px"></div><div class="sep" style="left:1762px"></div>
<div class="pressed" style="left:1659px;width:22px"></div><div class="pressed" style="left:1709px;width:22px"></div>
<svg class="ic" style="left:1586px;top:30px" width="175" height="22" viewBox="1586 30 175 22">
 <!-- reset zoom -->
 <g fill="none" stroke="#4a67a0" stroke-width="1.9"><path d="M1591.5 37.75A5.7 5.7 0 1 1 1591.3 40.9"/><path d="M1601.2 44.1L1604.4 47.5" stroke-linecap="round"/></g>
 <path d="M1590 33.2V38.4H1595.2Z" fill="#4a67a0"/>
 <!-- image -->
 <path d="M1613.8 35.2Q1617 33.6 1620 35Q1623 36.4 1626.3 34.8V47Q1623 48.4 1620 47.2Q1617 46 1613.8 47.6Z" fill="#fff" stroke="#4a67a0" stroke-width="1.3"/>
 <path d="M1615.6 44.8Q1620 43.4 1624.6 44.6V45.6Q1620 44.6 1615.6 45.8Z" fill="#2e8a2e"/>
 <path d="M1616 43.6L1617 42L1618 43.2L1620.5 43L1621.6 41.2L1622.8 43.4L1624 44.2H1616Z" fill="#c8a030"/>
 <path d="M1616.4 43L1617 42L1617.6 43ZM1621 42.4L1621.6 41.2L1622.3 42.4Z" fill="#d03030"/>
 <!-- flame 1 -->
 <g>
 <path d="M1641.6 37.6Q1646.5 32.2 1652.4 35.6" fill="none" stroke="#151515" stroke-width="1.4"/>
 <path d="M1651.6 33L1654.4 37.8L1649.6 37.2Z" fill="#151515"/>
 <g transform="translate(1642.3 35.9) scale(.86 .827) translate(-119.2 -34.2)"><path d="M125.3 34.2C126 36.2 123.6 38 123.6 40.4C123.6 41.4 124 42 124.2 42.6C123 42.4 121.6 41.8 120.6 41.2C120.8 42.6 119.2 44 119.2 46C119.2 48.4 121.6 49.8 125.8 49.8C130.2 49.8 132.8 48.2 132.8 45.8C132.8 44.6 132.4 43.8 132 43C131.6 43.8 131.2 44.2 130.6 44.4C131 42.4 130.4 40.2 129.2 38.8C129 40.2 128.4 41 127.6 41.6C127.8 39 126.6 36.4 125.3 34.2Z" fill="url(#fg)"/><path d="M125.4 43C124.6 44.4 122.6 45.2 122.6 47C122.6 48.6 124 49.5 125.6 49.5C127.2 49.5 128.4 48.6 128.4 47.2C128.4 46 127.8 45.4 127.4 44.6C127.2 45.2 126.8 45.6 126.4 45.6C126.4 44.6 126 43.8 125.4 43Z" fill="url(#fb)"/><path d="M130.4 45C130.8 46 131.8 46.4 131.4 47.6C131 48.4 130 48.9 129.2 49C130 47.8 129.9 46.4 130.4 45Z" fill="#fff23a"/></g>
 </g>
 <!-- flame 2 blue -->
 <path d="M1663.6 37.4Q1668.5 32 1674.4 35.4" fill="none" stroke="#151515" stroke-width="1.4"/>
 <path d="M1673.6 32.8L1676.4 37.6L1671.6 37Z" fill="#151515"/>
 <g transform="translate(1664.3 35.7) scale(.86 .84) translate(-119.2 -34.2)"><path d="M125.3 34.2C126 36.2 123.6 38 123.6 40.4C123.6 41.4 124 42 124.2 42.6C123 42.4 121.6 41.8 120.6 41.2C120.8 42.6 119.2 44 119.2 46C119.2 48.4 121.6 49.8 125.8 49.8C130.2 49.8 132.8 48.2 132.8 45.8C132.8 44.6 132.4 43.8 132 43C131.6 43.8 131.2 44.2 130.6 44.4C131 42.4 130.4 40.2 129.2 38.8C129 40.2 128.4 41 127.6 41.6C127.8 39 126.6 36.4 125.3 34.2Z" fill="#1a63e0"/>
 <path d="M120.6 42.4C120.4 43.6 119.4 44.6 119.4 46C119.4 48 121.4 49.4 124.6 49.7C122.2 48.2 120.8 45.8 120.6 42.4Z" fill="#c4e6ff"/>
 <path d="M131.9 43.6C132.9 45 133 47 131 48.6C129.8 49.4 128 49.8 126.6 49.8C129.6 48.6 131.4 46.6 131.9 43.6Z" fill="#0a1e58"/>
 <path d="M125.6 38.4C125.4 40.6 124.4 41.6 124.8 44C125.6 42.6 126.8 41.4 125.6 38.4Z" fill="#0d3cb0"/></g>
 <!-- M -->
 <defs><radialGradient id="mg" cx=".4" cy=".35" r=".75"><stop offset="0" stop-color="#26a826"/><stop offset=".6" stop-color="#148214"/><stop offset="1" stop-color="#064a06"/></radialGradient>
 <linearGradient id="pg" x1="0" y1="0" x2="1" y2="0"><stop offset="0" stop-color="#1f8a3c"/><stop offset="1" stop-color="#5fc07a"/></linearGradient></defs>
 <circle cx="1697.9" cy="40.9" r="6" fill="url(#mg)"/>
 <path d="M1695.4 43.6V38.4L1697.9 41.6L1700.4 38.4V43.6" fill="none" stroke="#f3e6f3" stroke-width="1.3"/>
 <!-- play + gear -->
 <path d="M1713.2 41.2L1720 44.6L1713.2 47.8Z" fill="url(#pg)" stroke="#1a8a3a" stroke-width=".5"/>
 <g transform="translate(1722.5 39.5)">
  <g fill="#f0a42a" stroke="#6a3210" stroke-width=".8"><rect x="-1.1" y="-4.1" width="2.2" height="8.2"/><rect x="-1.1" y="-4.1" width="2.2" height="8.2" transform="rotate(45)"/><rect x="-1.1" y="-4.1" width="2.2" height="8.2" transform="rotate(90)"/><rect x="-1.1" y="-4.1" width="2.2" height="8.2" transform="rotate(135)"/></g>
  <circle r="3" fill="#f5b234"/>
  <g fill="#f5b234"><rect x="-.7" y="-3.7" width="1.4" height="7.4"/><rect x="-.7" y="-3.7" width="1.4" height="7.4" transform="rotate(45)"/><rect x="-.7" y="-3.7" width="1.4" height="7.4" transform="rotate(90)"/><rect x="-.7" y="-3.7" width="1.4" height="7.4" transform="rotate(135)"/></g>
  <circle r="1.4" fill="#fff" stroke="#4a2810" stroke-width=".8"/>
 </g>
 <!-- save -->
 <rect x="1741.5" y="34.5" width="11" height="11" rx="1.5" fill="#c9d8ee" stroke="#4a6aa8" stroke-width="1"/>
 <rect x="1743.6" y="34.8" width="6.8" height="4.6" rx=".8" fill="#f4f8fc" stroke="#8aa0b0" stroke-width=".5"/>
 <path d="M1745 37.2H1749" stroke="#a8b8c8" stroke-width=".6"/>
 <path d="M1744.2 45.5V42.5Q1744.2 41.5 1745.2 41.5H1748.8Q1749.8 41.5 1749.8 42.5V45.5Z" fill="#3f5fa8"/>
 <rect x="1745.6" y="43" width="1.4" height="2.2" fill="#e8eefa"/>
 <g fill="#1a3a9a"><rect x="1748" y="47.4" width="1.7" height="1.5"/><rect x="1751" y="47.4" width="1.7" height="1.5"/><rect x="1754" y="47.4" width="1.7" height="1.5"/></g>
</svg>
<div class="ic" style="left:1770px;top:32px;font-family:'Liberation Sans',sans-serif;font-size:11.3px;line-height:18px;color:#7a7a7a;white-space:nowrap">Samples</div>
<svg class="ic" style="left:1816px;top:30px" width="76" height="22" viewBox="1816 30 76 22">
 <path d="M1820 39.5H1825.4L1822.7 43.4Z" fill="#111"/>
 <g fill="#fff" stroke="#555" stroke-width=".8"><circle cx="1839.2" cy="35.3" r="2"/><circle cx="1839.2" cy="41" r="2"/><circle cx="1839.2" cy="46.7" r="2"/></g>
 <rect x="1856.6" y="36.6" width="9" height="3" fill="#fff" stroke="#000" stroke-width="1.1"/>
 <g fill="#fff" stroke="#000" stroke-width="1.1"><path d="M1880.4 38.8V36.6H1885.4V40.6H1883.6"/><path d="M1880.4 37.2H1885.4" stroke-width="1.4"/><rect x="1878.6" y="39.6" width="5" height="4"/><path d="M1878.6 40.2H1883.6" stroke-width="1.4"/></g>
</svg>
<!-- status bar dots -->
<svg class="ic" style="left:1634px;top:1058px" width="5" height="18" viewBox="0 0 5 18"><g fill="#a39b8c"><rect x="1.2" y="2.2" width="2" height="1.7"/><rect x="1.2" y="6" width="2" height="1.7"/><rect x="1.2" y="9.8" width="2" height="1.7"/><rect x="1.2" y="13.6" width="2" height="1.7"/></g></svg>

</div>
</body>
</html>
